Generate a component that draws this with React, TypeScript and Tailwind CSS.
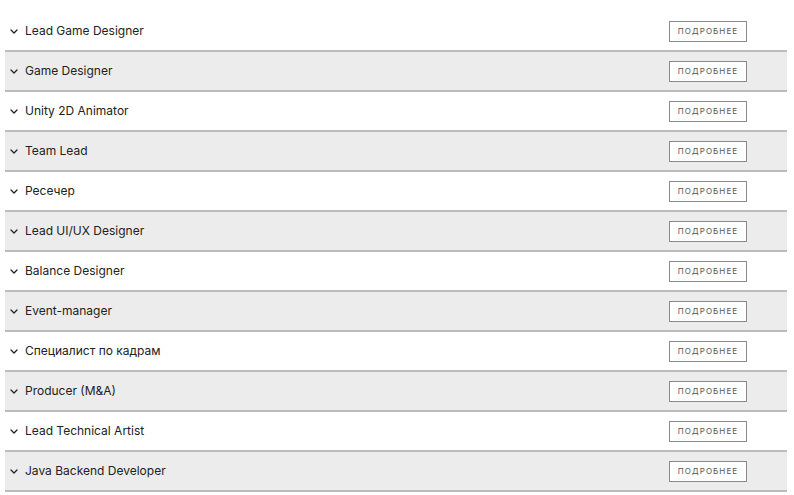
const jobs = [
  "Lead Game Designer",
  "Game Designer",
  "Unity 2D Animator",
  "Team Lead",
  "Ресечер",
  "Lead UI/UX Designer",
  "Balance Designer",
  "Event-manager",
  "Специалист по кадрам",
  "Producer (M&A)",
  "Lead Technical Artist",
  "Java Backend Developer",
];

function Chevron() {
  return (
    <svg width="8" height="5" viewBox="0 0 8 5" fill="none" stroke="#222" strokeWidth="1.3" strokeLinecap="round" strokeLinejoin="round">
      <path d="M1 1l3 3 3-3" />
    </svg>
  );
}

export default function App() {
  return (
    <div className="min-h-screen bg-white pt-3 pl-[5px] pr-[7px] font-['Inter','Noto_Sans',sans-serif] text-[#222]">
      {jobs.map((title, i) => (
        <div
          key={title}
          className={`flex h-10 items-center justify-between border-b-2 border-[#bcbcbc] pl-[5px] pr-[40px] ${
            i % 2 === 1 ? "bg-[#ececec]" : "bg-white"
          }`}
        >
          <div className="flex items-center gap-[7px] text-[12px] font-[380]">
            <Chevron />
            <span>{title}</span>
          </div>
          <button className="h-[21px] w-[78px] border border-[#8a8a8a] bg-white text-[8px] uppercase tracking-[1.1px] text-[#555]">
            Подробнее
          </button>
        </div>
      ))}
    </div>
  );
}
